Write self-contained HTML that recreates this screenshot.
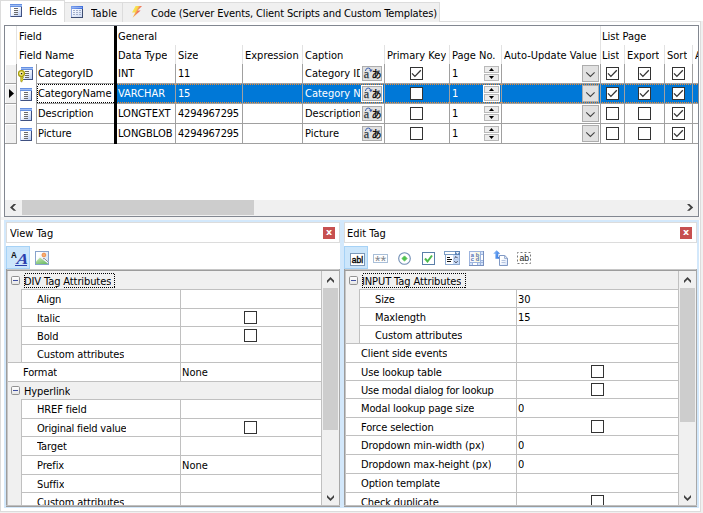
<!DOCTYPE html><html><head><meta charset="utf-8"><title>Fields</title><style>
html,body{margin:0;padding:0}
body{width:703px;height:513px;overflow:hidden;position:relative;background:#fff;font-family:"DejaVu Sans Condensed","DejaVu Sans","Liberation Sans",sans-serif;font-size:11px;color:#000}
div,svg{position:absolute;box-sizing:content-box}
.a{position:absolute}
.t{white-space:nowrap;overflow:hidden}
.w{color:#fff}
</style></head><body>
<div style="left:701px;top:21px;width:2px;height:492px;background:#f0f0f0"></div>
<div style="left:0px;top:512px;width:703px;height:1px;background:#f0f0f0"></div>
<div style="left:1px;top:217px;width:699px;height:3px;background:#f3f3f3"></div>
<div style="left:0px;top:21px;width:1px;height:491px;background:#dcdcdc"></div>
<div style="left:700px;top:21px;width:1px;height:491px;background:#dcdcdc"></div>
<div style="left:65px;top:21px;width:636px;height:1px;background:#dcdcdc"></div>
<div style="left:0px;top:511px;width:701px;height:1px;background:#dcdcdc"></div>
<div style="left:0px;top:0px;width:64px;height:22px;background:#fff;border-top:1px solid #dcdcdc;border-left:1px solid #dcdcdc;border-right:1px solid #dcdcdc;height:21px;width:63px"></div>
<svg class="a" style="left:10px;top:4px" width="12" height="13" viewBox="0 0 12 13"><defs><linearGradient id="fg" x1="0" y1="0" x2="1" y2="1"><stop offset="0.35" stop-color="#ffffff"/><stop offset="1" stop-color="#b6cbf6"/></linearGradient></defs><rect x="0" y="0" width="12" height="13" fill="#7d96d0"/><rect x="1" y="0" width="11" height="13" fill="#3f5080"/><rect x="0" y="0" width="11" height="12" fill="#aabce8"/><rect x="1" y="3" width="10" height="9" fill="url(#fg)"/><rect x="0" y="0" width="12" height="3" fill="#6590e2"/><rect x="0" y="1" width="12" height="1" fill="#a0bdf3"/><rect x="4" y="4" width="4" height="1" fill="#6a6a6a"/><rect x="4" y="6" width="4" height="1" fill="#6a6a6a"/><rect x="4" y="8" width="4" height="1" fill="#6a6a6a"/><rect x="4" y="10" width="4" height="1" fill="#6a6a6a"/></svg>
<div class="t" style="left:29px;top:4px;line-height:16px;height:16px;">Fields</div>
<div style="left:65px;top:2px;width:57px;height:19px;background:#f0f0f0;border-top:1px solid #dcdcdc;border-right:1px solid #dcdcdc;height:19px"></div>
<svg class="a" style="left:71px;top:6px" width="12" height="12" viewBox="0 0 12 12"><defs><linearGradient id="tg" x1="0" y1="0" x2="1" y2="1"><stop offset="0" stop-color="#ffffff"/><stop offset="1" stop-color="#cddaf4"/></linearGradient><linearGradient id="tt" x1="0" y1="0" x2="1" y2="0"><stop offset="0" stop-color="#7ba0ee"/><stop offset="1" stop-color="#3f6cd8"/></linearGradient></defs><rect x="0" y="0" width="12" height="12" fill="#3c4c70"/><rect x="0" y="0" width="11" height="11" fill="#94aade"/><rect x="1" y="3" width="10" height="8" fill="url(#tg)"/><rect x="0" y="0" width="12" height="3" fill="url(#tt)"/><rect x="1" y="1" width="10" height="1" fill="#9cbaf4" opacity="0.8"/><rect x="2" y="4" width="2" height="1" fill="#a3b0cc"/><rect x="5" y="4" width="2" height="1" fill="#a3b0cc"/><rect x="8" y="4" width="2" height="1" fill="#a3b0cc"/><rect x="2" y="6" width="2" height="1" fill="#a3b0cc"/><rect x="5" y="6" width="2" height="1" fill="#a3b0cc"/><rect x="8" y="6" width="2" height="1" fill="#a3b0cc"/><rect x="2" y="8" width="2" height="1" fill="#a3b0cc"/><rect x="5" y="8" width="2" height="1" fill="#a3b0cc"/><rect x="8" y="8" width="2" height="1" fill="#a3b0cc"/></svg>
<div class="t" style="left:91px;top:6px;line-height:16px;height:16px;letter-spacing:0.2px">Table</div>
<div style="left:123px;top:2px;width:316px;height:19px;background:#f0f0f0;border-top:1px solid #dcdcdc;border-right:1px solid #dcdcdc"></div>
<svg class="a" style="left:131px;top:5px" width="12" height="14" viewBox="0 0 12 14"><defs><linearGradient id="bg" gradientUnits="userSpaceOnUse" x1="3.96" y1="2.15" x2="9.67" y2="5.25"><stop offset="0" stop-color="#f6ea50"/><stop offset="0.4" stop-color="#f8d24e"/><stop offset="0.62" stop-color="#f28a58"/><stop offset="1" stop-color="#e8505a"/></linearGradient></defs><path d="M4.6 1 L11 1 L6.6 5.6 L9.6 5.6 L1.6 12.8 L4.2 7.6 L1 7.6 Z" fill="url(#bg)"/></svg>
<div class="t" style="left:151px;top:6px;line-height:16px;height:16px;letter-spacing:-0.13px">Code (Server Events, Client Scripts and Custom Templates)</div>
<div style="left:4px;top:25px;width:693px;height:190px;border:1px solid #828790;background:#fff"></div>
<div class="t" style="left:19px;top:27px;line-height:19px;height:19px;">Field</div>
<div class="t" style="left:118px;top:27px;line-height:19px;height:19px;">General</div>
<div class="t" style="left:602px;top:27px;line-height:19px;height:19px;">List Page</div>
<div class="t" style="left:19px;top:46px;line-height:19px;height:19px;">Field Name</div>
<div class="t" style="left:118px;top:46px;line-height:19px;height:19px;">Data Type</div>
<div class="t" style="left:178px;top:46px;line-height:19px;height:19px;">Size</div>
<div class="t" style="left:245px;top:46px;line-height:19px;height:19px;">Expression</div>
<div class="t" style="left:305px;top:46px;line-height:19px;height:19px;">Caption</div>
<div class="t" style="left:387px;top:46px;line-height:19px;height:19px;">Primary Key</div>
<div class="t" style="left:452px;top:46px;line-height:19px;height:19px;">Page No.</div>
<div class="t" style="left:504px;top:46px;line-height:19px;height:19px;">Auto-Update Value</div>
<div class="t" style="left:602px;top:46px;line-height:19px;height:19px;">List</div>
<div class="t" style="left:627px;top:46px;line-height:19px;height:19px;">Export</div>
<div class="t" style="left:667px;top:46px;line-height:19px;height:19px;">Sort</div>
<div class="t" style="left:695px;top:46px;line-height:19px;height:19px;width:3px">A</div>
<div style="left:16px;top:26px;width:1px;height:38px;background:#e2e2e2"></div>
<div style="left:175px;top:45px;width:1px;height:19px;background:#e2e2e2"></div>
<div style="left:242px;top:45px;width:1px;height:19px;background:#e2e2e2"></div>
<div style="left:302px;top:45px;width:1px;height:19px;background:#e2e2e2"></div>
<div style="left:384px;top:45px;width:1px;height:19px;background:#e2e2e2"></div>
<div style="left:449px;top:45px;width:1px;height:19px;background:#e2e2e2"></div>
<div style="left:501px;top:45px;width:1px;height:19px;background:#e2e2e2"></div>
<div style="left:624px;top:45px;width:1px;height:19px;background:#e2e2e2"></div>
<div style="left:664px;top:45px;width:1px;height:19px;background:#e2e2e2"></div>
<div style="left:692px;top:45px;width:1px;height:19px;background:#e2e2e2"></div>
<div style="left:600px;top:26px;width:1px;height:38px;background:#e2e2e2"></div>
<div style="left:5px;top:64px;width:11px;height:19px;background:#fff"></div>
<div style="left:6px;top:65px;width:10px;height:18px;background:#f0f0f0"></div>
<div style="left:5px;top:83px;width:12px;height:1px;background:#a0a0a0"></div>
<div style="left:36px;top:83px;width:662px;height:1px;background:#a0a0a0"></div>
<svg class="a" style="left:21px;top:67px" width="12" height="13" viewBox="0 0 12 13"><defs><linearGradient id="fg" x1="0" y1="0" x2="1" y2="1"><stop offset="0.35" stop-color="#ffffff"/><stop offset="1" stop-color="#b6cbf6"/></linearGradient></defs><rect x="0" y="0" width="12" height="13" fill="#7d96d0"/><rect x="1" y="0" width="11" height="13" fill="#3f5080"/><rect x="0" y="0" width="11" height="12" fill="#aabce8"/><rect x="1" y="3" width="10" height="9" fill="url(#fg)"/><rect x="0" y="0" width="12" height="3" fill="#6590e2"/><rect x="0" y="1" width="12" height="1" fill="#a0bdf3"/><rect x="4" y="4" width="4" height="1" fill="#6a6a6a"/><rect x="4" y="6" width="4" height="1" fill="#6a6a6a"/><rect x="4" y="8" width="4" height="1" fill="#6a6a6a"/><rect x="4" y="10" width="4" height="1" fill="#6a6a6a"/></svg>
<svg class="a" style="left:18px;top:70px" width="8" height="13" viewBox="0 0 8 13"><defs><radialGradient id="kg" cx="0.4" cy="0.45" r="0.6"><stop offset="0" stop-color="#fff6cc"/><stop offset="0.55" stop-color="#f0e270"/><stop offset="1" stop-color="#d6cc28"/></radialGradient></defs><path d="M2.7 6.4 L4.5 6.4 L4.5 7.4 L5.6 7.4 L4.7 8.4 L5.6 9.4 L4.7 10.2 L3.6 12.2 L2.7 11.2 Z" fill="#d9d026" stroke="#8a7a10" stroke-width="0.55"/><circle cx="3.5" cy="3.6" r="3" fill="url(#kg)" stroke="#a59c08" stroke-width="1.1"/><rect x="2.9" y="3" width="1.3" height="1.3" fill="#111"/></svg>
<div class="t" style="left:38px;top:64px;line-height:19px;height:19px;width:75px;letter-spacing:-0.08px">CategoryID</div>
<div class="t" style="left:118px;top:64px;line-height:19px;height:19px;width:57px">INT</div>
<div class="t" style="left:178px;top:64px;line-height:19px;height:19px;width:64px;letter-spacing:-0.2px">11</div>
<div class="t" style="left:305px;top:64px;line-height:19px;height:19px;width:55px">Category ID</div>
<div class="a" style="left:362px;top:66px;width:18px;height:13px;border:1px solid #adadad;background:#e1e1e1"></div><svg class="a" style="left:362px;top:66px" width="20" height="15" viewBox="0 0 20 15"><path d="M3.4 5 C3.6 1.4 8.6 1.2 8.8 4.2" fill="none" stroke="#3a5fb0" stroke-width="1"/><path d="M7 3.8 L8.9 6.2 L10.6 3.6 Z" fill="#3a5fb0"/><text x="1.8" y="11.6" font-family='"Liberation Serif",serif' font-size="12" fill="#2c3a42" stroke="#2c3a42" stroke-width="0.25">a</text><text x="9.4" y="12.3" font-family='"Liberation Sans","Noto Sans CJK JP",sans-serif' font-size="10" fill="#000" stroke="#000" stroke-width="0.25">あ</text></svg>
<svg class="a" style="left:410px;top:67px" width="13" height="13" viewBox="0 0 13 13"><rect x="0.5" y="0.5" width="12" height="12" fill="#fff" stroke="#333"/><path d="M2 6.4 L4.9 9.4 L10.8 3.2" fill="none" stroke="#333" stroke-width="1.25"/></svg>
<div class="t" style="left:452px;top:64px;line-height:19px;height:19px;">1</div>
<div class="a" style="left:484px;top:66px;width:13px;height:5px;border:1px solid #b9b9b9;background:#ececec"></div><svg class="a" style="left:489px;top:68px" width="5" height="3" viewBox="0 0 5 3"><path d="M0 3 L2.5 0 L5 3 Z" fill="#000"/></svg><div class="a" style="left:484px;top:74px;width:13px;height:5px;border:1px solid #b9b9b9;background:#ececec"></div><svg class="a" style="left:489px;top:76px" width="5" height="3" viewBox="0 0 5 3"><path d="M0 0 L2.5 3 L5 0 Z" fill="#000"/></svg>
<div class="a" style="left:582px;top:65px;width:15px;height:15px;border:1px solid #adadad;background:#e1e1e1"></div><svg class="a" style="left:582px;top:65px" width="17" height="17" viewBox="0 0 17 17"><path d="M4.2 7.4 L8.4 11.4 L12.6 7.4" fill="none" stroke="#444" stroke-width="1.1"/></svg>
<svg class="a" style="left:606px;top:67px" width="13" height="13" viewBox="0 0 13 13"><rect x="0.5" y="0.5" width="12" height="12" fill="#fff" stroke="#333"/><path d="M2 6.4 L4.9 9.4 L10.8 3.2" fill="none" stroke="#333" stroke-width="1.25"/></svg>
<svg class="a" style="left:638px;top:67px" width="13" height="13" viewBox="0 0 13 13"><rect x="0.5" y="0.5" width="12" height="12" fill="#fff" stroke="#333"/><path d="M2 6.4 L4.9 9.4 L10.8 3.2" fill="none" stroke="#333" stroke-width="1.25"/></svg>
<svg class="a" style="left:672px;top:67px" width="13" height="13" viewBox="0 0 13 13"><rect x="0.5" y="0.5" width="12" height="12" fill="#fff" stroke="#333"/><path d="M2 6.4 L4.9 9.4 L10.8 3.2" fill="none" stroke="#333" stroke-width="1.25"/></svg>
<div style="left:5px;top:84px;width:11px;height:19px;background:#fff"></div>
<div style="left:6px;top:85px;width:10px;height:18px;background:#f0f0f0"></div>
<div style="left:117px;top:84px;width:581px;height:19px;background:#0078d7"></div>
<div style="left:118px;top:84px;width:580px;height:1px;background:repeating-linear-gradient(90deg,#f28a2e 0,#f28a2e 1px,transparent 1px,transparent 2px)"></div>
<div style="left:118px;top:102px;width:580px;height:1px;background:repeating-linear-gradient(90deg,#f28a2e 0,#f28a2e 1px,transparent 1px,transparent 2px)"></div>
<div style="left:361px;top:85px;width:22px;height:17px;background:#fff"></div>
<div style="left:483px;top:85px;width:17px;height:17px;background:#fff"></div>
<svg class="a" style="left:9px;top:89px" width="5" height="9" viewBox="0 0 5 9"><path d="M0 0 L5 4.5 L0 9 Z" fill="#000"/></svg>
<svg class="a" style="left:37px;top:84px" width="79" height="19" viewBox="0 0 79 19"><rect x="0.5" y="0.5" width="78" height="18" fill="none" stroke="#000" stroke-width="1" stroke-dasharray="1 1" shape-rendering="crispEdges"/></svg>
<div style="left:5px;top:103px;width:12px;height:1px;background:#a0a0a0"></div>
<div style="left:36px;top:103px;width:662px;height:1px;background:#a0a0a0"></div>
<svg class="a" style="left:20px;top:88px" width="12" height="13" viewBox="0 0 12 13"><defs><linearGradient id="fg" x1="0" y1="0" x2="1" y2="1"><stop offset="0.35" stop-color="#ffffff"/><stop offset="1" stop-color="#b6cbf6"/></linearGradient></defs><rect x="0" y="0" width="12" height="13" fill="#7d96d0"/><rect x="1" y="0" width="11" height="13" fill="#3f5080"/><rect x="0" y="0" width="11" height="12" fill="#aabce8"/><rect x="1" y="3" width="10" height="9" fill="url(#fg)"/><rect x="0" y="0" width="12" height="3" fill="#6590e2"/><rect x="0" y="1" width="12" height="1" fill="#a0bdf3"/><rect x="4" y="4" width="4" height="1" fill="#6a6a6a"/><rect x="4" y="6" width="4" height="1" fill="#6a6a6a"/><rect x="4" y="8" width="4" height="1" fill="#6a6a6a"/><rect x="4" y="10" width="4" height="1" fill="#6a6a6a"/></svg>
<div class="t" style="left:38px;top:84px;line-height:19px;height:19px;width:75px;letter-spacing:-0.08px">CategoryName</div>
<div class="t w" style="left:118px;top:84px;line-height:19px;height:19px;width:57px">VARCHAR</div>
<div class="t w" style="left:178px;top:84px;line-height:19px;height:19px;width:64px;letter-spacing:-0.2px">15</div>
<div class="t w" style="left:305px;top:84px;line-height:19px;height:19px;width:55px">Category Name</div>
<div class="a" style="left:362px;top:86px;width:18px;height:13px;border:1px solid #adadad;background:#e1e1e1"></div><svg class="a" style="left:362px;top:86px" width="20" height="15" viewBox="0 0 20 15"><path d="M3.4 5 C3.6 1.4 8.6 1.2 8.8 4.2" fill="none" stroke="#3a5fb0" stroke-width="1"/><path d="M7 3.8 L8.9 6.2 L10.6 3.6 Z" fill="#3a5fb0"/><text x="1.8" y="11.6" font-family='"Liberation Serif",serif' font-size="12" fill="#2c3a42" stroke="#2c3a42" stroke-width="0.25">a</text><text x="9.4" y="12.3" font-family='"Liberation Sans","Noto Sans CJK JP",sans-serif' font-size="10" fill="#000" stroke="#000" stroke-width="0.25">あ</text></svg>
<svg class="a" style="left:410px;top:87px" width="13" height="13" viewBox="0 0 13 13"><rect x="0.5" y="0.5" width="12" height="12" fill="#fff" stroke="#333"/></svg>
<div class="t w" style="left:452px;top:84px;line-height:19px;height:19px;">1</div>
<div class="a" style="left:484px;top:86px;width:13px;height:5px;border:1px solid #b9b9b9;background:#ececec"></div><svg class="a" style="left:489px;top:88px" width="5" height="3" viewBox="0 0 5 3"><path d="M0 3 L2.5 0 L5 3 Z" fill="#000"/></svg><div class="a" style="left:484px;top:94px;width:13px;height:5px;border:1px solid #b9b9b9;background:#ececec"></div><svg class="a" style="left:489px;top:96px" width="5" height="3" viewBox="0 0 5 3"><path d="M0 0 L2.5 3 L5 0 Z" fill="#000"/></svg>
<div class="a" style="left:582px;top:85px;width:15px;height:15px;border:1px solid #adadad;background:#e1e1e1"></div><svg class="a" style="left:582px;top:85px" width="17" height="17" viewBox="0 0 17 17"><path d="M4.2 7.4 L8.4 11.4 L12.6 7.4" fill="none" stroke="#444" stroke-width="1.1"/></svg>
<svg class="a" style="left:606px;top:87px" width="13" height="13" viewBox="0 0 13 13"><rect x="0.5" y="0.5" width="12" height="12" fill="#fff" stroke="#333"/><path d="M2 6.4 L4.9 9.4 L10.8 3.2" fill="none" stroke="#333" stroke-width="1.25"/></svg>
<svg class="a" style="left:638px;top:87px" width="13" height="13" viewBox="0 0 13 13"><rect x="0.5" y="0.5" width="12" height="12" fill="#fff" stroke="#333"/><path d="M2 6.4 L4.9 9.4 L10.8 3.2" fill="none" stroke="#333" stroke-width="1.25"/></svg>
<svg class="a" style="left:672px;top:87px" width="13" height="13" viewBox="0 0 13 13"><rect x="0.5" y="0.5" width="12" height="12" fill="#fff" stroke="#333"/><path d="M2 6.4 L4.9 9.4 L10.8 3.2" fill="none" stroke="#333" stroke-width="1.25"/></svg>
<div style="left:5px;top:104px;width:11px;height:19px;background:#fff"></div>
<div style="left:6px;top:105px;width:10px;height:18px;background:#f0f0f0"></div>
<div style="left:5px;top:123px;width:12px;height:1px;background:#a0a0a0"></div>
<div style="left:36px;top:123px;width:662px;height:1px;background:#a0a0a0"></div>
<svg class="a" style="left:20px;top:108px" width="12" height="13" viewBox="0 0 12 13"><defs><linearGradient id="fg" x1="0" y1="0" x2="1" y2="1"><stop offset="0.35" stop-color="#ffffff"/><stop offset="1" stop-color="#b6cbf6"/></linearGradient></defs><rect x="0" y="0" width="12" height="13" fill="#7d96d0"/><rect x="1" y="0" width="11" height="13" fill="#3f5080"/><rect x="0" y="0" width="11" height="12" fill="#aabce8"/><rect x="1" y="3" width="10" height="9" fill="url(#fg)"/><rect x="0" y="0" width="12" height="3" fill="#6590e2"/><rect x="0" y="1" width="12" height="1" fill="#a0bdf3"/><rect x="4" y="4" width="4" height="1" fill="#6a6a6a"/><rect x="4" y="6" width="4" height="1" fill="#6a6a6a"/><rect x="4" y="8" width="4" height="1" fill="#6a6a6a"/><rect x="4" y="10" width="4" height="1" fill="#6a6a6a"/></svg>
<div class="t" style="left:38px;top:104px;line-height:19px;height:19px;width:75px;letter-spacing:-0.08px">Description</div>
<div class="t" style="left:118px;top:104px;line-height:19px;height:19px;width:57px">LONGTEXT</div>
<div class="t" style="left:178px;top:104px;line-height:19px;height:19px;width:64px;letter-spacing:-0.2px">4294967295</div>
<div class="t" style="left:305px;top:104px;line-height:19px;height:19px;width:55px">Description</div>
<div class="a" style="left:362px;top:106px;width:18px;height:13px;border:1px solid #adadad;background:#e1e1e1"></div><svg class="a" style="left:362px;top:106px" width="20" height="15" viewBox="0 0 20 15"><path d="M3.4 5 C3.6 1.4 8.6 1.2 8.8 4.2" fill="none" stroke="#3a5fb0" stroke-width="1"/><path d="M7 3.8 L8.9 6.2 L10.6 3.6 Z" fill="#3a5fb0"/><text x="1.8" y="11.6" font-family='"Liberation Serif",serif' font-size="12" fill="#2c3a42" stroke="#2c3a42" stroke-width="0.25">a</text><text x="9.4" y="12.3" font-family='"Liberation Sans","Noto Sans CJK JP",sans-serif' font-size="10" fill="#000" stroke="#000" stroke-width="0.25">あ</text></svg>
<svg class="a" style="left:410px;top:107px" width="13" height="13" viewBox="0 0 13 13"><rect x="0.5" y="0.5" width="12" height="12" fill="#fff" stroke="#333"/></svg>
<div class="t" style="left:452px;top:104px;line-height:19px;height:19px;">1</div>
<div class="a" style="left:484px;top:106px;width:13px;height:5px;border:1px solid #b9b9b9;background:#ececec"></div><svg class="a" style="left:489px;top:108px" width="5" height="3" viewBox="0 0 5 3"><path d="M0 3 L2.5 0 L5 3 Z" fill="#000"/></svg><div class="a" style="left:484px;top:114px;width:13px;height:5px;border:1px solid #b9b9b9;background:#ececec"></div><svg class="a" style="left:489px;top:116px" width="5" height="3" viewBox="0 0 5 3"><path d="M0 0 L2.5 3 L5 0 Z" fill="#000"/></svg>
<div class="a" style="left:582px;top:105px;width:15px;height:15px;border:1px solid #adadad;background:#e1e1e1"></div><svg class="a" style="left:582px;top:105px" width="17" height="17" viewBox="0 0 17 17"><path d="M4.2 7.4 L8.4 11.4 L12.6 7.4" fill="none" stroke="#444" stroke-width="1.1"/></svg>
<svg class="a" style="left:606px;top:107px" width="13" height="13" viewBox="0 0 13 13"><rect x="0.5" y="0.5" width="12" height="12" fill="#fff" stroke="#333"/></svg>
<svg class="a" style="left:638px;top:107px" width="13" height="13" viewBox="0 0 13 13"><rect x="0.5" y="0.5" width="12" height="12" fill="#fff" stroke="#333"/></svg>
<svg class="a" style="left:672px;top:107px" width="13" height="13" viewBox="0 0 13 13"><rect x="0.5" y="0.5" width="12" height="12" fill="#fff" stroke="#333"/><path d="M2 6.4 L4.9 9.4 L10.8 3.2" fill="none" stroke="#333" stroke-width="1.25"/></svg>
<div style="left:5px;top:124px;width:11px;height:19px;background:#fff"></div>
<div style="left:6px;top:125px;width:10px;height:18px;background:#f0f0f0"></div>
<div style="left:5px;top:143px;width:12px;height:1px;background:#a0a0a0"></div>
<div style="left:36px;top:143px;width:662px;height:1px;background:#a0a0a0"></div>
<svg class="a" style="left:20px;top:128px" width="12" height="13" viewBox="0 0 12 13"><defs><linearGradient id="fg" x1="0" y1="0" x2="1" y2="1"><stop offset="0.35" stop-color="#ffffff"/><stop offset="1" stop-color="#b6cbf6"/></linearGradient></defs><rect x="0" y="0" width="12" height="13" fill="#7d96d0"/><rect x="1" y="0" width="11" height="13" fill="#3f5080"/><rect x="0" y="0" width="11" height="12" fill="#aabce8"/><rect x="1" y="3" width="10" height="9" fill="url(#fg)"/><rect x="0" y="0" width="12" height="3" fill="#6590e2"/><rect x="0" y="1" width="12" height="1" fill="#a0bdf3"/><rect x="4" y="4" width="4" height="1" fill="#6a6a6a"/><rect x="4" y="6" width="4" height="1" fill="#6a6a6a"/><rect x="4" y="8" width="4" height="1" fill="#6a6a6a"/><rect x="4" y="10" width="4" height="1" fill="#6a6a6a"/></svg>
<div class="t" style="left:38px;top:124px;line-height:19px;height:19px;width:75px;letter-spacing:-0.08px">Picture</div>
<div class="t" style="left:118px;top:124px;line-height:19px;height:19px;width:57px">LONGBLOB</div>
<div class="t" style="left:178px;top:124px;line-height:19px;height:19px;width:64px;letter-spacing:-0.2px">4294967295</div>
<div class="t" style="left:305px;top:124px;line-height:19px;height:19px;width:55px">Picture</div>
<div class="a" style="left:362px;top:126px;width:18px;height:13px;border:1px solid #adadad;background:#e1e1e1"></div><svg class="a" style="left:362px;top:126px" width="20" height="15" viewBox="0 0 20 15"><path d="M3.4 5 C3.6 1.4 8.6 1.2 8.8 4.2" fill="none" stroke="#3a5fb0" stroke-width="1"/><path d="M7 3.8 L8.9 6.2 L10.6 3.6 Z" fill="#3a5fb0"/><text x="1.8" y="11.6" font-family='"Liberation Serif",serif' font-size="12" fill="#2c3a42" stroke="#2c3a42" stroke-width="0.25">a</text><text x="9.4" y="12.3" font-family='"Liberation Sans","Noto Sans CJK JP",sans-serif' font-size="10" fill="#000" stroke="#000" stroke-width="0.25">あ</text></svg>
<svg class="a" style="left:410px;top:127px" width="13" height="13" viewBox="0 0 13 13"><rect x="0.5" y="0.5" width="12" height="12" fill="#fff" stroke="#333"/></svg>
<div class="t" style="left:452px;top:124px;line-height:19px;height:19px;">1</div>
<div class="a" style="left:484px;top:126px;width:13px;height:5px;border:1px solid #b9b9b9;background:#ececec"></div><svg class="a" style="left:489px;top:128px" width="5" height="3" viewBox="0 0 5 3"><path d="M0 3 L2.5 0 L5 3 Z" fill="#000"/></svg><div class="a" style="left:484px;top:134px;width:13px;height:5px;border:1px solid #b9b9b9;background:#ececec"></div><svg class="a" style="left:489px;top:136px" width="5" height="3" viewBox="0 0 5 3"><path d="M0 0 L2.5 3 L5 0 Z" fill="#000"/></svg>
<div class="a" style="left:582px;top:125px;width:15px;height:15px;border:1px solid #adadad;background:#e1e1e1"></div><svg class="a" style="left:582px;top:125px" width="17" height="17" viewBox="0 0 17 17"><path d="M4.2 7.4 L8.4 11.4 L12.6 7.4" fill="none" stroke="#444" stroke-width="1.1"/></svg>
<svg class="a" style="left:606px;top:127px" width="13" height="13" viewBox="0 0 13 13"><rect x="0.5" y="0.5" width="12" height="12" fill="#fff" stroke="#333"/></svg>
<svg class="a" style="left:638px;top:127px" width="13" height="13" viewBox="0 0 13 13"><rect x="0.5" y="0.5" width="12" height="12" fill="#fff" stroke="#333"/></svg>
<svg class="a" style="left:672px;top:127px" width="13" height="13" viewBox="0 0 13 13"><rect x="0.5" y="0.5" width="12" height="12" fill="#fff" stroke="#333"/><path d="M2 6.4 L4.9 9.4 L10.8 3.2" fill="none" stroke="#333" stroke-width="1.25"/></svg>
<div style="left:16px;top:64px;width:1px;height:80px;background:#a0a0a0"></div>
<div style="left:36px;top:64px;width:1px;height:80px;background:#a0a0a0"></div>
<div style="left:175px;top:64px;width:1px;height:80px;background:#a0a0a0"></div>
<div style="left:242px;top:64px;width:1px;height:80px;background:#a0a0a0"></div>
<div style="left:302px;top:64px;width:1px;height:80px;background:#a0a0a0"></div>
<div style="left:384px;top:64px;width:1px;height:80px;background:#a0a0a0"></div>
<div style="left:449px;top:64px;width:1px;height:80px;background:#a0a0a0"></div>
<div style="left:501px;top:64px;width:1px;height:80px;background:#a0a0a0"></div>
<div style="left:600px;top:64px;width:1px;height:80px;background:#a0a0a0"></div>
<div style="left:624px;top:64px;width:1px;height:80px;background:#a0a0a0"></div>
<div style="left:664px;top:64px;width:1px;height:80px;background:#a0a0a0"></div>
<div style="left:692px;top:64px;width:1px;height:80px;background:#a0a0a0"></div>
<div style="left:114px;top:26px;width:3px;height:118px;background:#000"></div>
<div style="left:5px;top:200px;width:693px;height:16px;background:#f0f0f0"></div>
<div style="left:22px;top:200px;width:232px;height:15px;background:#cdcdcd"></div>
<svg class="a" style="left:10px;top:204px" width="7" height="7" viewBox="0 0 7 7"><polygon points="6.2,0 3.7,0 0,3.4 3.7,6.8 6.2,6.8 2.7,3.4" fill="#404040"/></svg>
<svg class="a" style="left:687px;top:204px" width="7" height="7" viewBox="0 0 7 7"><polygon points="0,0 2.5,0 6.2,3.4 2.5,6.8 0,6.8 3.5,3.4" fill="#404040"/></svg>
<div style="left:4px;top:220px;width:338px;height:288px;background:#d3e8fb"></div>
<div style="left:6px;top:222px;width:334px;height:285px;background:#fff"></div>
<div style="left:6px;top:222px;width:332px;height:19px;border:1px solid #dcdcdc;background:#fff"></div>
<div class="t" style="left:10px;top:224px;line-height:19px;height:19px;">View Tag</div>
<div style="left:323px;top:227px;width:12px;height:12px;background:#c75050"></div>
<svg class="a" style="left:323px;top:227px" width="12" height="12" viewBox="0 0 12 12"><text x="6" y="8.4" text-anchor="middle" font-family='"DejaVu Sans","Liberation Sans",sans-serif' font-size="9.5" font-weight="bold" fill="#fff">x</text></svg>
<div style="left:6px;top:246px;width:22px;height:21px;border:1px solid #a6d2f6;background:#cce6fb"></div>
<svg class="a" style="left:10px;top:250px" width="19" height="17" viewBox="0 0 19 17"><text transform="translate(0.9,7.8) scale(0.84,1)" x="0" y="0" font-family='"Liberation Sans",sans-serif' font-size="9.6" font-weight="bold" fill="#111">A</text><text transform="translate(6.2,14) skewX(-8) scale(1.16,1)" x="0" y="0" font-family='"Liberation Serif",serif' font-size="15" font-weight="bold" font-style="italic" fill="#2b3fae">A</text><rect x="5" y="15" width="12" height="1" fill="#2b3fae"/></svg>
<svg class="a" style="left:35px;top:251px" width="14" height="14" viewBox="0 0 14 14"><defs><linearGradient id="sky" x1="0" y1="0" x2="1" y2="0.6"><stop offset="0.3" stop-color="#ffffff"/><stop offset="1" stop-color="#d4e2f6"/></linearGradient><linearGradient id="hill" x1="0" y1="0" x2="0.6" y2="1"><stop offset="0" stop-color="#cfeab8"/><stop offset="1" stop-color="#74bf6c"/></linearGradient></defs><rect x="0.5" y="0.5" width="13" height="13" fill="url(#sky)" stroke="#88a2cc"/><circle cx="8.9" cy="4" r="1.9" fill="#f6b070" stroke="#ee8040" stroke-width="0.8"/><path d="M1 13 L1 10.6 L5 6.4 L12.8 12.6 L13 13 Z" fill="url(#hill)"/><path d="M7.6 8.6 L9 7.6 L13 11.2" fill="none" stroke="#fff" stroke-width="1.6"/><path d="M7.8 8.3 L9 7.3 L13 10.8" fill="none" stroke="#4a5560" stroke-width="0.7"/></svg>
<div style="left:6px;top:269px;width:334px;height:238px;background:#fff"></div>
<div style="left:322px;top:271px;width:17px;height:234px;background:#f0f0f0"></div>
<div style="left:323px;top:288px;width:15px;height:142px;background:#cdcdcd"></div>
<svg class="a" style="left:327px;top:277px" width="7" height="7" viewBox="0 0 7 7"><polygon points="0,3.6 3.5,0 7,3.6 7,6.1 3.5,2.5 0,6.1" fill="#404040"/></svg>
<svg class="a" style="left:327px;top:495px" width="7" height="7" viewBox="0 0 7 7"><polygon points="0,0 3.5,3.5 7,0 7,2.4 3.5,5.9 0,2.4" fill="#404040"/></svg>
<div style="left:8px;top:271px;width:313px;height:18px;background:#f0f0f0"></div>
<svg class="a" style="left:11px;top:276px" width="9" height="9" viewBox="0 0 9 9"><defs><linearGradient id="eg" x1="0" y1="0" x2="0" y2="1"><stop offset="0" stop-color="#ffffff"/><stop offset="1" stop-color="#e4e4e4"/></linearGradient></defs><rect x="0.5" y="0.5" width="8" height="8" rx="1.2" fill="url(#eg)" stroke="#919191"/><rect x="2" y="4" width="5" height="1" fill="#3f4fa0"/></svg>
<div class="t" style="left:24px;top:273px;line-height:17px;height:17px;letter-spacing:-0.1px">DIV Tag Attributes</div>
<svg class="a" style="left:24px;top:273px" width="91" height="15" viewBox="0 0 91 15"><rect x="0.5" y="0.5" width="90" height="14" fill="none" stroke="#000" stroke-width="1" stroke-dasharray="1 1" shape-rendering="crispEdges"/></svg>
<div style="left:8px;top:289px;width:13px;height:19px;background:#f0f0f0"></div>
<div style="left:21px;top:289px;width:301px;height:1px;background:#c0c0c0"></div>
<div style="left:21px;top:289px;width:1px;height:19px;background:#c0c0c0"></div>
<div style="left:180px;top:289px;width:1px;height:19px;background:#c0c0c0"></div>
<div class="t" style="left:37px;top:291px;line-height:17px;height:17px;letter-spacing:-0.12px">Align</div>
<div style="left:8px;top:308px;width:13px;height:18px;background:#f0f0f0"></div>
<div style="left:21px;top:308px;width:301px;height:1px;background:#c0c0c0"></div>
<div style="left:21px;top:308px;width:1px;height:18px;background:#c0c0c0"></div>
<div style="left:180px;top:308px;width:1px;height:18px;background:#c0c0c0"></div>
<div class="t" style="left:37px;top:310px;line-height:17px;height:17px;letter-spacing:-0.12px">Italic</div>
<div class="a" style="left:244px;top:311px;width:13px;height:13px;overflow:hidden"><svg class="a" style="left:0px;top:0px" width="13" height="13" viewBox="0 0 13 13"><rect x="0.5" y="0.5" width="12" height="12" fill="#fff" stroke="#333"/></svg></div>
<div style="left:8px;top:326px;width:13px;height:18px;background:#f0f0f0"></div>
<div style="left:21px;top:326px;width:301px;height:1px;background:#c0c0c0"></div>
<div style="left:21px;top:326px;width:1px;height:18px;background:#c0c0c0"></div>
<div style="left:180px;top:326px;width:1px;height:18px;background:#c0c0c0"></div>
<div class="t" style="left:37px;top:328px;line-height:17px;height:17px;letter-spacing:-0.12px">Bold</div>
<div class="a" style="left:244px;top:329px;width:13px;height:13px;overflow:hidden"><svg class="a" style="left:0px;top:0px" width="13" height="13" viewBox="0 0 13 13"><rect x="0.5" y="0.5" width="12" height="12" fill="#fff" stroke="#333"/></svg></div>
<div style="left:8px;top:344px;width:13px;height:18px;background:#f0f0f0"></div>
<div style="left:21px;top:344px;width:301px;height:1px;background:#c0c0c0"></div>
<div style="left:21px;top:344px;width:1px;height:18px;background:#c0c0c0"></div>
<div style="left:180px;top:344px;width:1px;height:18px;background:#c0c0c0"></div>
<div class="t" style="left:37px;top:346px;line-height:17px;height:17px;letter-spacing:-0.12px">Custom attributes</div>
<div style="left:8px;top:362px;width:314px;height:1px;background:#c0c0c0"></div>
<div style="left:180px;top:362px;width:1px;height:19px;background:#c0c0c0"></div>
<div class="t" style="left:23px;top:364px;line-height:17px;height:17px;letter-spacing:-0.12px">Format</div>
<div class="t" style="left:182px;top:364px;line-height:17px;height:17px">None</div>
<div style="left:8px;top:381px;width:314px;height:1px;background:#c0c0c0"></div>
<div style="left:8px;top:382px;width:313px;height:17px;background:#f0f0f0"></div>
<svg class="a" style="left:11px;top:386px" width="9" height="9" viewBox="0 0 9 9"><defs><linearGradient id="eg" x1="0" y1="0" x2="0" y2="1"><stop offset="0" stop-color="#ffffff"/><stop offset="1" stop-color="#e4e4e4"/></linearGradient></defs><rect x="0.5" y="0.5" width="8" height="8" rx="1.2" fill="url(#eg)" stroke="#919191"/><rect x="2" y="4" width="5" height="1" fill="#3f4fa0"/></svg>
<div class="t" style="left:24px;top:383px;line-height:17px;height:17px;letter-spacing:-0.1px">Hyperlink</div>
<div style="left:8px;top:399px;width:13px;height:19px;background:#f0f0f0"></div>
<div style="left:21px;top:399px;width:301px;height:1px;background:#c0c0c0"></div>
<div style="left:21px;top:399px;width:1px;height:19px;background:#c0c0c0"></div>
<div style="left:180px;top:399px;width:1px;height:19px;background:#c0c0c0"></div>
<div class="t" style="left:37px;top:401px;line-height:17px;height:17px;letter-spacing:-0.12px">HREF field</div>
<div style="left:8px;top:418px;width:13px;height:18px;background:#f0f0f0"></div>
<div style="left:21px;top:418px;width:301px;height:1px;background:#c0c0c0"></div>
<div style="left:21px;top:418px;width:1px;height:18px;background:#c0c0c0"></div>
<div style="left:180px;top:418px;width:1px;height:18px;background:#c0c0c0"></div>
<div class="t" style="left:37px;top:420px;line-height:17px;height:17px;letter-spacing:-0.2px">Original field value</div>
<div class="a" style="left:244px;top:421px;width:13px;height:13px;overflow:hidden"><svg class="a" style="left:0px;top:0px" width="13" height="13" viewBox="0 0 13 13"><rect x="0.5" y="0.5" width="12" height="12" fill="#fff" stroke="#333"/></svg></div>
<div style="left:8px;top:436px;width:13px;height:19px;background:#f0f0f0"></div>
<div style="left:21px;top:436px;width:301px;height:1px;background:#c0c0c0"></div>
<div style="left:21px;top:436px;width:1px;height:19px;background:#c0c0c0"></div>
<div style="left:180px;top:436px;width:1px;height:19px;background:#c0c0c0"></div>
<div class="t" style="left:37px;top:438px;line-height:17px;height:17px;letter-spacing:-0.12px">Target</div>
<div style="left:8px;top:455px;width:13px;height:19px;background:#f0f0f0"></div>
<div style="left:21px;top:455px;width:301px;height:1px;background:#c0c0c0"></div>
<div style="left:21px;top:455px;width:1px;height:19px;background:#c0c0c0"></div>
<div style="left:180px;top:455px;width:1px;height:19px;background:#c0c0c0"></div>
<div class="t" style="left:37px;top:457px;line-height:17px;height:17px;letter-spacing:-0.12px">Prefix</div>
<div class="t" style="left:182px;top:457px;line-height:17px;height:17px">None</div>
<div style="left:8px;top:474px;width:13px;height:18px;background:#f0f0f0"></div>
<div style="left:21px;top:474px;width:301px;height:1px;background:#c0c0c0"></div>
<div style="left:21px;top:474px;width:1px;height:18px;background:#c0c0c0"></div>
<div style="left:180px;top:474px;width:1px;height:18px;background:#c0c0c0"></div>
<div class="t" style="left:37px;top:476px;line-height:17px;height:17px;letter-spacing:-0.12px">Suffix</div>
<div style="left:8px;top:492px;width:13px;height:13px;background:#f0f0f0"></div>
<div style="left:21px;top:492px;width:301px;height:1px;background:#c0c0c0"></div>
<div style="left:21px;top:492px;width:1px;height:13px;background:#c0c0c0"></div>
<div style="left:180px;top:492px;width:1px;height:13px;background:#c0c0c0"></div>
<div class="t" style="left:37px;top:494px;line-height:17px;height:11px;letter-spacing:-0.12px">Custom attributes</div>
<div style="left:321px;top:271px;width:1px;height:234px;background:#c0c0c0"></div>
<div style="left:6px;top:269px;width:334px;height:1px;background:#c6c6c6"></div>
<div style="left:6px;top:270px;width:334px;height:1px;background:#9c9c9c"></div>
<div style="left:6px;top:269px;width:1px;height:238px;background:#9c9c9c"></div>
<div style="left:7px;top:271px;width:1px;height:235px;background:#c6c6c6"></div>
<div style="left:339px;top:269px;width:1px;height:238px;background:#a8a8a8"></div>
<div style="left:6px;top:505px;width:334px;height:1px;background:#c0c0c0"></div>
<div style="left:6px;top:506px;width:334px;height:1px;background:#9c9c9c"></div>
<div style="left:342px;top:220px;width:357px;height:288px;background:#d3e8fb"></div>
<div style="left:344px;top:222px;width:353px;height:285px;background:#fff"></div>
<div style="left:344px;top:222px;width:351px;height:19px;border:1px solid #dcdcdc;background:#fff"></div>
<div class="t" style="left:347px;top:224px;line-height:19px;height:19px;">Edit Tag</div>
<div style="left:680px;top:227px;width:12px;height:12px;background:#c75050"></div>
<svg class="a" style="left:680px;top:227px" width="12" height="12" viewBox="0 0 12 12"><text x="6" y="8.4" text-anchor="middle" font-family='"DejaVu Sans","Liberation Sans",sans-serif' font-size="9.5" font-weight="bold" fill="#fff">x</text></svg>
<div style="left:344px;top:246px;width:22px;height:21px;border:1px solid #a6d2f6;background:#cce6fb"></div>
<div class="a" style="left:350px;top:253px;width:13px;height:11px;border:1px solid #7b98b8;background:#fff"></div>
<svg class="a" style="left:350px;top:253px" width="15" height="13" viewBox="0 0 15 13"><text x="1.7" y="10.2" font-family='"Liberation Sans",sans-serif' font-size="9.5" fill="#000" stroke="#000" stroke-width="0.35" textLength="11.4" lengthAdjust="spacingAndGlyphs">abl</text></svg>
<div class="a" style="left:373px;top:254px;width:13px;height:7px;border:1px solid #a9bfd8;background:#fff"></div>
<svg class="a" style="left:373px;top:254px" width="15" height="9" viewBox="0 0 15 9"><text x="1.8" y="12.2" font-family='"Liberation Sans",sans-serif' font-size="15" fill="#80868e" textLength="11.5" lengthAdjust="spacingAndGlyphs">**</text></svg>
<svg class="a" style="left:398px;top:252px" width="13" height="13" viewBox="0 0 13 13"><circle cx="6.5" cy="6.5" r="5.8" fill="#fff" stroke="#6f8db4" stroke-width="1.1"/><path d="M6.5 3.9 L9.1 6.5 L6.5 9.1 L3.9 6.5 Z" fill="#4fc24f" stroke="#4fc24f" stroke-width="0.8" stroke-linejoin="round"/></svg>
<svg class="a" style="left:422px;top:252px" width="13" height="13" viewBox="0 0 13 13"><rect x="0.5" y="0.5" width="12" height="12" fill="#fff" stroke="#5a7fa8"/><path d="M3 6.5 L5.5 9.5 L10 3.5" fill="none" stroke="#4cbb4c" stroke-width="2"/></svg>
<svg class="a" style="left:444px;top:251px" width="16" height="14" viewBox="0 0 16 14"><rect x="0" y="0" width="16" height="4" fill="#7a9cc4"/><rect x="1" y="1" width="10" height="2" fill="#fff"/><rect x="11" y="0" width="5" height="4" fill="#5b82b4"/><path d="M11.6 1 L15.4 1 L13.5 3.2 Z" fill="#e8f0fb"/><rect x="1" y="4" width="15" height="10" fill="#8eaad0"/><rect x="2" y="4" width="7" height="9" fill="#fff"/><rect x="9" y="4" width="6" height="9" fill="#c9dcf8"/><rect x="9" y="8.4" width="6" height="0.8" fill="#a8c0e4"/><rect x="3" y="6" width="3" height="1" fill="#111"/><rect x="3" y="8" width="5" height="1" fill="#111"/><rect x="3" y="10" width="4" height="1" fill="#111"/><path d="M10.4 7.2 L12 5.6 L13.6 7.2 M10.4 10.2 L12 11.8 L13.6 10.2" fill="none" stroke="#223" stroke-width="0.9"/></svg>
<svg class="a" style="left:469px;top:251px" width="15" height="15" viewBox="0 0 15 15" shape-rendering="crispEdges"><rect x="0" y="0" width="15" height="15" fill="#7890be"/><rect x="0" y="0" width="14" height="14" fill="#9db4de"/><rect x="1" y="1" width="10" height="10" fill="#f5f7fc"/><rect x="6" y="1" width="5" height="10" fill="#fbf8de"/><rect x="12" y="1" width="2" height="2" fill="#d4e4fb"/><rect x="12" y="4" width="2" height="5" fill="#fff"/><rect x="12" y="10" width="2" height="1" fill="#d4e4fb"/><rect x="1" y="12" width="2" height="2" fill="#d4e4fb"/><rect x="4" y="12" width="4" height="2" fill="#fff"/><rect x="9" y="12" width="2" height="2" fill="#d4e4fb"/><rect x="12" y="12" width="2" height="2" fill="#d4e4fb"/><text x="1.8" y="5.8" font-family='"Liberation Sans",sans-serif' font-size="5.8" font-weight="bold" fill="#5575b5" textLength="8.4" lengthAdjust="spacing">ab</text><text x="1.8" y="10.2" font-family='"Liberation Sans",sans-serif' font-size="5.8" font-weight="bold" fill="#5575b5" textLength="8.4" lengthAdjust="spacing">cd</text></svg>
<svg class="a" style="left:493px;top:250px" width="16" height="17" viewBox="0 0 16 17"><defs><linearGradient id="ug" x1="0" y1="0" x2="1" y2="0.4"><stop offset="0" stop-color="#a6ccfa"/><stop offset="0.6" stop-color="#4f8fea"/><stop offset="1" stop-color="#3a78dc"/></linearGradient><linearGradient id="dg" x1="0" y1="0" x2="1" y2="1"><stop offset="0.3" stop-color="#ffffff"/><stop offset="1" stop-color="#d6e2f8"/></linearGradient></defs><path d="M3.6 0.3 L7.2 3.8 L5.3 3.8 L5.3 7 L8.4 7 L8.4 8.8 L2.4 8.8 L2.4 3.8 L0.2 3.8 Z" fill="url(#ug)"/><path d="M6.5 5.5 L11.8 5.5 L14.5 8.2 L14.5 15.5 L6.5 15.5 Z" fill="url(#dg)" stroke="#7f98c4"/><path d="M11.6 5.6 L11.6 8.4 L14.4 8.4" fill="none" stroke="#7f98c4" stroke-width="0.8"/><rect x="8.5" y="10" width="4" height="1" fill="#b4c4e0"/><rect x="8.5" y="12" width="4" height="1" fill="#b4c4e0"/></svg>
<svg class="a" style="left:517px;top:252px" width="14" height="12" viewBox="0 0 14 12"><rect x="0.5" y="0.5" width="13" height="11" fill="#fff" stroke="#777" stroke-dasharray="2 2" stroke-dashoffset="1"/><text x="2.6" y="9" font-family='"Liberation Sans",sans-serif' font-size="8.6" fill="#1a1a1a">ab</text></svg>
<div style="left:344px;top:269px;width:353px;height:238px;background:#fff"></div>
<div style="left:679px;top:271px;width:17px;height:234px;background:#f0f0f0"></div>
<div style="left:680px;top:288px;width:15px;height:134px;background:#cdcdcd"></div>
<svg class="a" style="left:684px;top:277px" width="7" height="7" viewBox="0 0 7 7"><polygon points="0,3.6 3.5,0 7,3.6 7,6.1 3.5,2.5 0,6.1" fill="#404040"/></svg>
<svg class="a" style="left:684px;top:495px" width="7" height="7" viewBox="0 0 7 7"><polygon points="0,0 3.5,3.5 7,0 7,2.4 3.5,5.9 0,2.4" fill="#404040"/></svg>
<div style="left:346px;top:271px;width:332px;height:18px;background:#f0f0f0"></div>
<svg class="a" style="left:349px;top:276px" width="9" height="9" viewBox="0 0 9 9"><defs><linearGradient id="eg" x1="0" y1="0" x2="0" y2="1"><stop offset="0" stop-color="#ffffff"/><stop offset="1" stop-color="#e4e4e4"/></linearGradient></defs><rect x="0.5" y="0.5" width="8" height="8" rx="1.2" fill="url(#eg)" stroke="#919191"/><rect x="2" y="4" width="5" height="1" fill="#3f4fa0"/></svg>
<div class="t" style="left:362px;top:273px;line-height:17px;height:17px;letter-spacing:-0.1px">INPUT Tag Attributes</div>
<svg class="a" style="left:362px;top:273px" width="104" height="15" viewBox="0 0 104 15"><rect x="0.5" y="0.5" width="103" height="14" fill="none" stroke="#000" stroke-width="1" stroke-dasharray="1 1" shape-rendering="crispEdges"/></svg>
<div style="left:346px;top:289px;width:13px;height:18px;background:#f0f0f0"></div>
<div style="left:359px;top:289px;width:320px;height:1px;background:#c0c0c0"></div>
<div style="left:359px;top:289px;width:1px;height:18px;background:#c0c0c0"></div>
<div style="left:516px;top:289px;width:1px;height:18px;background:#c0c0c0"></div>
<div class="t" style="left:375px;top:291px;line-height:17px;height:17px;letter-spacing:-0.12px">Size</div>
<div class="t" style="left:518px;top:291px;line-height:17px;height:17px">30</div>
<div style="left:346px;top:307px;width:13px;height:18px;background:#f0f0f0"></div>
<div style="left:359px;top:307px;width:320px;height:1px;background:#c0c0c0"></div>
<div style="left:359px;top:307px;width:1px;height:18px;background:#c0c0c0"></div>
<div style="left:516px;top:307px;width:1px;height:18px;background:#c0c0c0"></div>
<div class="t" style="left:375px;top:309px;line-height:17px;height:17px;letter-spacing:-0.12px">Maxlength</div>
<div class="t" style="left:518px;top:309px;line-height:17px;height:17px">15</div>
<div style="left:346px;top:325px;width:13px;height:18px;background:#f0f0f0"></div>
<div style="left:359px;top:325px;width:320px;height:1px;background:#c0c0c0"></div>
<div style="left:359px;top:325px;width:1px;height:18px;background:#c0c0c0"></div>
<div style="left:516px;top:325px;width:1px;height:18px;background:#c0c0c0"></div>
<div class="t" style="left:375px;top:327px;line-height:17px;height:17px;letter-spacing:-0.12px">Custom attributes</div>
<div style="left:346px;top:343px;width:333px;height:1px;background:#c0c0c0"></div>
<div style="left:516px;top:343px;width:1px;height:19px;background:#c0c0c0"></div>
<div class="t" style="left:361px;top:345px;line-height:17px;height:17px;letter-spacing:-0.12px">Client side events</div>
<div style="left:346px;top:362px;width:333px;height:1px;background:#c0c0c0"></div>
<div style="left:516px;top:362px;width:1px;height:18px;background:#c0c0c0"></div>
<div class="t" style="left:361px;top:364px;line-height:17px;height:17px;letter-spacing:-0.12px">Use lookup table</div>
<div class="a" style="left:591px;top:365px;width:13px;height:13px;overflow:hidden"><svg class="a" style="left:0px;top:0px" width="13" height="13" viewBox="0 0 13 13"><rect x="0.5" y="0.5" width="12" height="12" fill="#fff" stroke="#333"/></svg></div>
<div style="left:346px;top:380px;width:333px;height:1px;background:#c0c0c0"></div>
<div style="left:516px;top:380px;width:1px;height:18px;background:#c0c0c0"></div>
<div class="t" style="left:361px;top:382px;line-height:17px;height:17px;letter-spacing:-0.22px">Use modal dialog for lookup</div>
<div class="a" style="left:591px;top:383px;width:13px;height:13px;overflow:hidden"><svg class="a" style="left:0px;top:0px" width="13" height="13" viewBox="0 0 13 13"><rect x="0.5" y="0.5" width="12" height="12" fill="#fff" stroke="#333"/></svg></div>
<div style="left:346px;top:398px;width:333px;height:1px;background:#c0c0c0"></div>
<div style="left:516px;top:398px;width:1px;height:19px;background:#c0c0c0"></div>
<div class="t" style="left:361px;top:400px;line-height:17px;height:17px;letter-spacing:-0.12px">Modal lookup page size</div>
<div class="t" style="left:518px;top:400px;line-height:17px;height:17px">0</div>
<div style="left:346px;top:417px;width:333px;height:1px;background:#c0c0c0"></div>
<div style="left:516px;top:417px;width:1px;height:18px;background:#c0c0c0"></div>
<div class="t" style="left:361px;top:419px;line-height:17px;height:17px;letter-spacing:-0.12px">Force selection</div>
<div class="a" style="left:591px;top:420px;width:13px;height:13px;overflow:hidden"><svg class="a" style="left:0px;top:0px" width="13" height="13" viewBox="0 0 13 13"><rect x="0.5" y="0.5" width="12" height="12" fill="#fff" stroke="#333"/></svg></div>
<div style="left:346px;top:435px;width:333px;height:1px;background:#c0c0c0"></div>
<div style="left:516px;top:435px;width:1px;height:19px;background:#c0c0c0"></div>
<div class="t" style="left:361px;top:437px;line-height:17px;height:17px;letter-spacing:-0.12px">Dropdown min-width (px)</div>
<div class="t" style="left:518px;top:437px;line-height:17px;height:17px">0</div>
<div style="left:346px;top:454px;width:333px;height:1px;background:#c0c0c0"></div>
<div style="left:516px;top:454px;width:1px;height:19px;background:#c0c0c0"></div>
<div class="t" style="left:361px;top:456px;line-height:17px;height:17px;letter-spacing:-0.12px">Dropdown max-height (px)</div>
<div class="t" style="left:518px;top:456px;line-height:17px;height:17px">0</div>
<div style="left:346px;top:473px;width:333px;height:1px;background:#c0c0c0"></div>
<div style="left:516px;top:473px;width:1px;height:19px;background:#c0c0c0"></div>
<div class="t" style="left:361px;top:475px;line-height:17px;height:17px;letter-spacing:-0.12px">Option template</div>
<div style="left:346px;top:492px;width:333px;height:1px;background:#c0c0c0"></div>
<div style="left:516px;top:492px;width:1px;height:13px;background:#c0c0c0"></div>
<div class="t" style="left:361px;top:494px;line-height:17px;height:11px;letter-spacing:-0.12px">Check duplicate</div>
<div class="a" style="left:591px;top:495px;width:13px;height:10px;overflow:hidden"><svg class="a" style="left:0px;top:0px" width="13" height="13" viewBox="0 0 13 13"><rect x="0.5" y="0.5" width="12" height="12" fill="#fff" stroke="#333"/></svg></div>
<div style="left:678px;top:271px;width:1px;height:234px;background:#c0c0c0"></div>
<div style="left:344px;top:269px;width:353px;height:1px;background:#c6c6c6"></div>
<div style="left:344px;top:270px;width:353px;height:1px;background:#9c9c9c"></div>
<div style="left:344px;top:269px;width:1px;height:238px;background:#9c9c9c"></div>
<div style="left:345px;top:271px;width:1px;height:235px;background:#c6c6c6"></div>
<div style="left:696px;top:269px;width:1px;height:238px;background:#a8a8a8"></div>
<div style="left:344px;top:505px;width:353px;height:1px;background:#c0c0c0"></div>
<div style="left:344px;top:506px;width:353px;height:1px;background:#9c9c9c"></div>
</body></html>
